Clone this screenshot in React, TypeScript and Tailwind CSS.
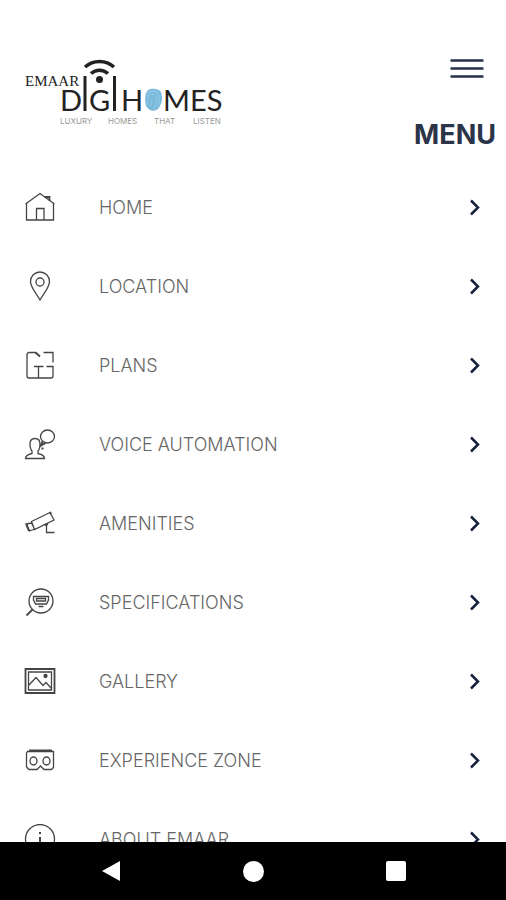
import React from 'react';

interface MenuItem {
  label: string;
  icon: React.ReactNode;
}

const menuItems: MenuItem[] = [
  {
    label: 'HOME',
    icon: (
      <>
        <path d="M1.5 13 16 2.5 30.5 13M2.5 12v17h27V12M12.5 29V17.5H20V29" />
        <path d="M20.5 6h5v4" strokeWidth="1.8" />
      </>
    ),
  },
  {
    label: 'LOCATION',
    icon: (
      <>
        <path d="M16 30C12.5 23.5 6.5 17.5 6.5 11.5a9.5 9.5 0 0 1 19 0c0 6-6 12-9.5 18.5Z" />
        <circle cx="16" cy="12" r="4" />
      </>
    ),
  },
  {
    label: 'PLANS',
    icon: (
      <>
        <path d="M12 3.5H5a2 2 0 0 0-2 2V27a2 2 0 0 0 2 2h22a2 2 0 0 0 2-2v-9.5h-6.5M29 13.5v-10h-9.5M10 17.5h9.5M14.5 17.5V29" />
        <path d="m11.5 3.5 4.5 4" strokeWidth="2" />
      </>
    ),
  },
  {
    label: 'VOICE AUTOMATION',
    icon: (
      <>
        <path d="M1.5 30.5c0-3 2-4 6.5-5V23c-1.5-1.5-2-4-2-7 0-3.5 2-5.5 5-5.5s5 2 5 5.5c0 3-.5 5.5-2 7v2.5c4.500 1 6.500 2 6.500 5Z" />
        <ellipse cx="23.5" cy="8.5" rx="7" ry="6.5" />
        <path d="m18.5 13.5-1.5 4 4.5-2.5M17.500 20.500h2" strokeWidth="2" />
      </>
    ),
  },
  {
    label: 'AMENITIES',
    icon: (
      <>
        <path d="M7.5 14.5 26 5.5l4 7.5-19.5 9.5ZM2.5 17l5-1 3 6-5 2ZM22.5 18v7.5h8" />
        <path d="M2 16.500 5 24M20.500 18l3.500-1M26 5l1 2" strokeWidth="2" />
      </>
    ),
  },
  {
    label: 'SPECIFICATIONS',
    icon: (
      <>
        <circle cx="17" cy="15" r="12" />
        <path d="m8.5 23.5-6 6" strokeWidth="1.8" />
        <path d="M9.5 10.5h15V14l-2 4h-11l-2-4Z" />
        <path d="M12.5 12.5h9V15h-9ZM14.5 20.5h5" />
      </>
    ),
  },
  {
    label: 'GALLERY',
    icon: (
      <>
        <path d="M1.5 4h29v24h-29Z" strokeWidth="1.8" />
        <path d="M4.5 7h23v18h-23ZM4.5 20.5l7.5-8 7 8 3-3 5.5 6" />
        <circle cx="21.5" cy="11" r="1.5" fill="currentColor" />
      </>
    ),
  },
  {
    label: 'EXPERIENCE ZONE',
    icon: (
      <>
        <path d="M3.5 7.5h26v16l-2 2H20L16.5 22 13 25.5H5l-2-2-.5-1V9Z" />
        <path d="M5 6.5h23" strokeWidth="2" />
        <ellipse cx="9.5" cy="17" rx="3.5" ry="4" />
        <ellipse cx="22.5" cy="17" rx="3.5" ry="4" />
      </>
    ),
  },
  {
    label: 'ABOUT EMAAR',
    icon: (
      <>
        <circle cx="16" cy="16" r="14.5" />
        <path d="M16 14v10M16 9v2" strokeWidth="2" />
      </>
    ),
  },
];

const Logo = () => (
  <svg viewBox="0 0 202 70" className="h-[70px] w-[202px]" role="img" aria-label="Emaar Digi Homes">
    {/* Wifi signal */}
    <g fill="none" stroke="#222" strokeWidth="3.5">
      <path d="M60 9c8-7.5 21-7.5 29 0" />
      <path d="M66 15.5c5-4.5 12-4.5 17 0" />
    </g>
    <circle cx="74.5" cy="21.5" r="3.5" fill="#222" />
    <path d="M60 18v35M89.5 18v35" stroke="#222" strokeWidth="3" />

    <g fill="#222">
      <text x="0" y="28" className="font-['Liberation_Serif'] text-[15px]">EMAAR</text>
      <g className="font-['Lato'] text-[29px]">
        <text x="35" y="53">D</text>
        <text x="64" y="53">G</text>
        <text x="96" y="53">H</text>
        <text x="138" y="53">MES</text>
      </g>
    </g>

    {/* Fingerprint */}
    <path d="M123 32c4-2 10-2 13 2 2 6 1 12-3 17-4 3-9 2-12-3-1-5-2-12 2-16Z" fill="#79b9dc" />
    <g fill="none" stroke="#9ed1ea" strokeWidth="0.7">
      <path d="M121 39c2-7 11-8 13-1 1 4 0 9-3 12" />
      <path d="M123 48c-1-6 0-12 4-12s6 5 4 10l-3 5" />
      <path d="M126 48c0-4 0-8 2-8M122 35c3-3 9-3 11 0" />
    </g>

    <g fill="#999" className="font-['Inter'] text-[8px]">
      <text x="35" y="66">LUXURY</text>
      <text x="83" y="66">HOMES</text>
      <text x="129" y="66">THAT</text>
      <text x="168" y="66">LISTEN</text>
    </g>
  </svg>
);

const Chevron = () => (
  <svg viewBox="0 0 12 18" className="h-[18px] w-3" fill="none" stroke="#17213d" strokeWidth="2.5" aria-hidden="true">
    <path d="m2 1.5 7 7-7 7" />
  </svg>
);

const App: React.FC = () => {
  return (
    <div className="flex h-screen flex-col bg-white font-['Inter',sans-serif]">
      {/* Header */}
      <header className="flex shrink-0 justify-between pt-[58px] pr-[10px] pl-[25px]">
        <Logo />
        <button className="flex h-[110px] flex-col items-end" aria-label="Menu">
          <svg viewBox="0 0 34 22" className="mr-3 h-[22px] w-[34px]" stroke="#26324a" strokeWidth="2.6" aria-hidden="true">
            <path d="M0.5 2.5h33M0.5 10.5h33M0.5 18.5h33" />
          </svg>
          <span className="mt-[39px] text-[27px] leading-8 font-bold text-[#2b3448]">MENU</span>
        </button>
      </header>

      {/* Menu list */}
      <nav className="min-h-0 flex-1 overflow-hidden">
        <ul>
          {menuItems.map((item) => (
            <li key={item.label}>
              <a href="#" className="flex h-[79px] items-center pr-[25px] pl-6">
                <svg
                  viewBox="0 1 32 32"
                  className="size-8 shrink-0 text-[#444]"
                  fill="none"
                  stroke="currentColor"
                  strokeWidth="1.3"
                  aria-hidden="true"
                >
                  {item.icon}
                </svg>
                <span className="ml-[43px] flex-1 text-[18px] font-light text-[#666]">{item.label}</span>
                <Chevron />
              </a>
            </li>
          ))}
        </ul>
      </nav>

      {/* System navigation bar */}
      <footer className="flex h-[58px] shrink-0 items-center justify-between bg-black pr-[100px] pl-[101px]">
        <button aria-label="Back">
          <svg viewBox="0 0 20 22" className="h-[22px] w-5" fill="#fff">
            <path d="M19 1v20L1 11Z" />
          </svg>
        </button>
        <button aria-label="Home" className="size-[21px] rounded-full bg-white" />
        <button aria-label="Recent apps" className="size-5 rounded-xs bg-white" />
      </footer>
    </div>
  );
};

export default App;
